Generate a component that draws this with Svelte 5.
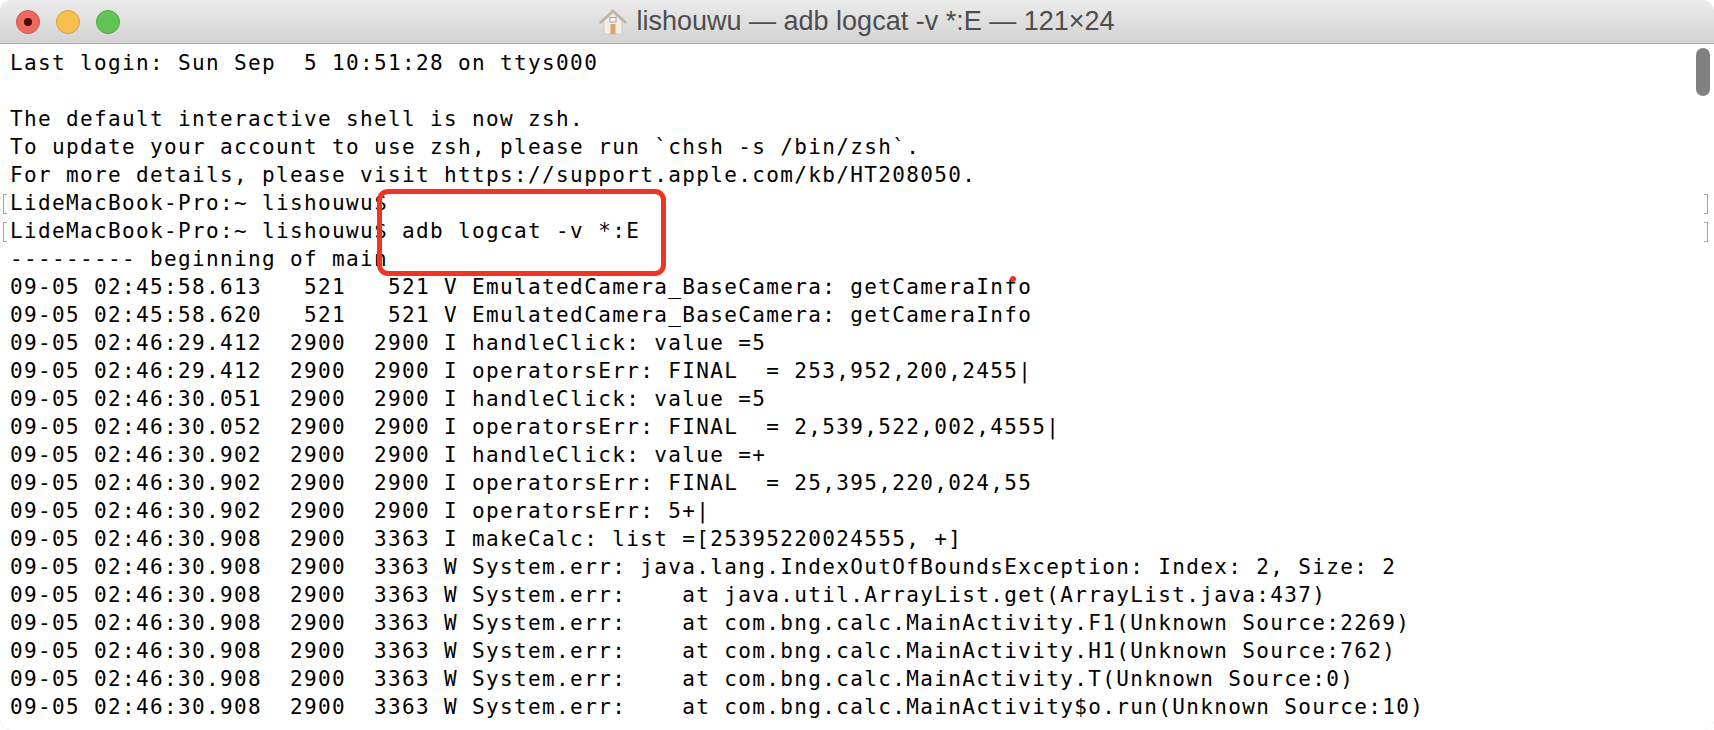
<script>
    const lines = [
        { text: "Last login: Sun Sep  5 10:51:28 on ttys000" },
        { text: "" },
        { text: "The default interactive shell is now zsh." },
        { text: "To update your account to use zsh, please run `chsh -s /bin/zsh`." },
        { text: "For more details, please visit https://support.apple.com/kb/HT208050." },
        { text: "LideMacBook-Pro:~ lishouwu$", mark: true },
        { text: "LideMacBook-Pro:~ lishouwu$ adb logcat -v *:E", mark: true },
        { text: "--------- beginning of main" },
        { text: "09-05 02:45:58.613   521   521 V EmulatedCamera_BaseCamera: getCameraInfo" },
        { text: "09-05 02:45:58.620   521   521 V EmulatedCamera_BaseCamera: getCameraInfo" },
        { text: "09-05 02:46:29.412  2900  2900 I handleClick: value =5" },
        { text: "09-05 02:46:29.412  2900  2900 I operatorsErr: FINAL  = 253,952,200,2455|" },
        { text: "09-05 02:46:30.051  2900  2900 I handleClick: value =5" },
        { text: "09-05 02:46:30.052  2900  2900 I operatorsErr: FINAL  = 2,539,522,002,4555|" },
        { text: "09-05 02:46:30.902  2900  2900 I handleClick: value =+" },
        { text: "09-05 02:46:30.902  2900  2900 I operatorsErr: FINAL  = 25,395,220,024,55" },
        { text: "09-05 02:46:30.902  2900  2900 I operatorsErr: 5+|" },
        { text: "09-05 02:46:30.908  2900  3363 I makeCalc: list =[25395220024555, +]" },
        { text: "09-05 02:46:30.908  2900  3363 W System.err: java.lang.IndexOutOfBoundsException: Index: 2, Size: 2" },
        { text: "09-05 02:46:30.908  2900  3363 W System.err:    at java.util.ArrayList.get(ArrayList.java:437)" },
        { text: "09-05 02:46:30.908  2900  3363 W System.err:    at com.bng.calc.MainActivity.F1(Unknown Source:2269)" },
        { text: "09-05 02:46:30.908  2900  3363 W System.err:    at com.bng.calc.MainActivity.H1(Unknown Source:762)" },
        { text: "09-05 02:46:30.908  2900  3363 W System.err:    at com.bng.calc.MainActivity.T(Unknown Source:0)" },
        { text: "09-05 02:46:30.908  2900  3363 W System.err:    at com.bng.calc.MainActivity$o.run(Unknown Source:10)" },
    ];
</script>

<div class="window">
    <header class="titlebar">
        <div class="lights">
            <span class="light close"><i></i></span>
            <span class="light min"></span>
            <span class="light max"></span>
        </div>
        <div class="title">
            <svg width="28" height="26" viewBox="0 0 28 26">
                <path d="M5 12 V25 H23 V12 L14 4 Z" fill="#f1efe9" stroke="#c9c5bd" stroke-width="0.8" />
                <path d="M1.5 13.5 L14 2 L26.5 13.5" fill="none" stroke="#bfb4a2" stroke-width="2.4" stroke-linecap="round" />
                <rect x="11" y="8.5" width="6" height="4.5" fill="#fbfbfa" stroke="#8f8f8f" stroke-width="0.8" />
                <rect x="11.5" y="15" width="5" height="10" fill="#e0a45f" />
            </svg>
            <span>lishouwu — adb logcat -v *:E — 121×24</span>
        </div>
    </header>
    <div class="terminal">
        {#each lines as line}
            <div class="line" class:mark={line.mark}>{line.text}</div>
        {/each}
        <div class="scrollbar"></div>
        <div class="highlight"></div>
        <div class="dot"></div>
    </div>
</div>

<style>
    :global(body) {
        background: #fff;
        overflow: hidden;
    }

    .window {
        width: 1714px;
        height: 730px;
        display: flex;
        flex-direction: column;
        overflow: hidden;
        border-radius: 12px 12px 10px 10px;
        box-shadow: inset 0 0 0 1px #d8d8d8;
    }

    .titlebar {
        height: 43px;
        flex: none;
        display: flex;
        align-items: center;
        justify-content: center;
        position: relative;
        background: linear-gradient(#ebebeb, #d3d3d3);
        border-bottom: 1px solid #b0b0b0;
    }

    .lights {
        position: absolute;
        left: 16px;
        top: 10px;
        display: flex;
        gap: 16px;
    }

    .light {
        width: 24px;
        height: 24px;
        border-radius: 50%;
        box-sizing: border-box;
        display: flex;
        align-items: center;
        justify-content: center;
    }

    .close {
        background: #ee6a5f;
        border: 1px solid #d2564c;
    }

    .close i {
        width: 8px;
        height: 8px;
        border-radius: 50%;
        background: #4f0802;
    }

    .min {
        background: #f6be4f;
        border: 1px solid #d9a43c;
    }

    .max {
        background: #61c454;
        border: 1px solid #4fa93f;
    }

    .title {
        display: flex;
        align-items: center;
        gap: 9px;
        font-family: "Liberation Sans", sans-serif;
        font-size: 27px;
        color: #4d4d4d;
    }

    .terminal {
        flex: 1;
        position: relative;
        background: #fff;
        padding-top: 5px;
        font-family: "DejaVu Sans Mono", monospace;
        font-size: 21px;
        letter-spacing: 1.36px;
        color: #000;
    }

    .line {
        height: 28px;
        line-height: 28px;
        padding-left: 10px;
        white-space: pre;
        position: relative;
    }

    .mark::before,
    .mark::after {
        content: "";
        position: absolute;
        top: 5px;
        width: 3px;
        height: 18px;
        border: 1px solid #a8a8a8;
    }

    .mark::before {
        left: 3px;
        border-right: none;
    }

    .mark::after {
        left: 1704px;
        border-left: none;
    }

    .scrollbar {
        position: absolute;
        left: 1696px;
        top: 4px;
        width: 14px;
        height: 48px;
        border-radius: 7px;
        background: #808080;
    }

    .highlight {
        position: absolute;
        left: 377px;
        top: 145px;
        width: 289px;
        height: 87px;
        box-sizing: border-box;
        border: 5px solid #ee3524;
        border-radius: 11px;
    }

    .dot {
        position: absolute;
        left: 1010px;
        top: 232px;
        width: 6px;
        height: 6px;
        border-radius: 50%;
        background: #ee3524;
    }
</style>
